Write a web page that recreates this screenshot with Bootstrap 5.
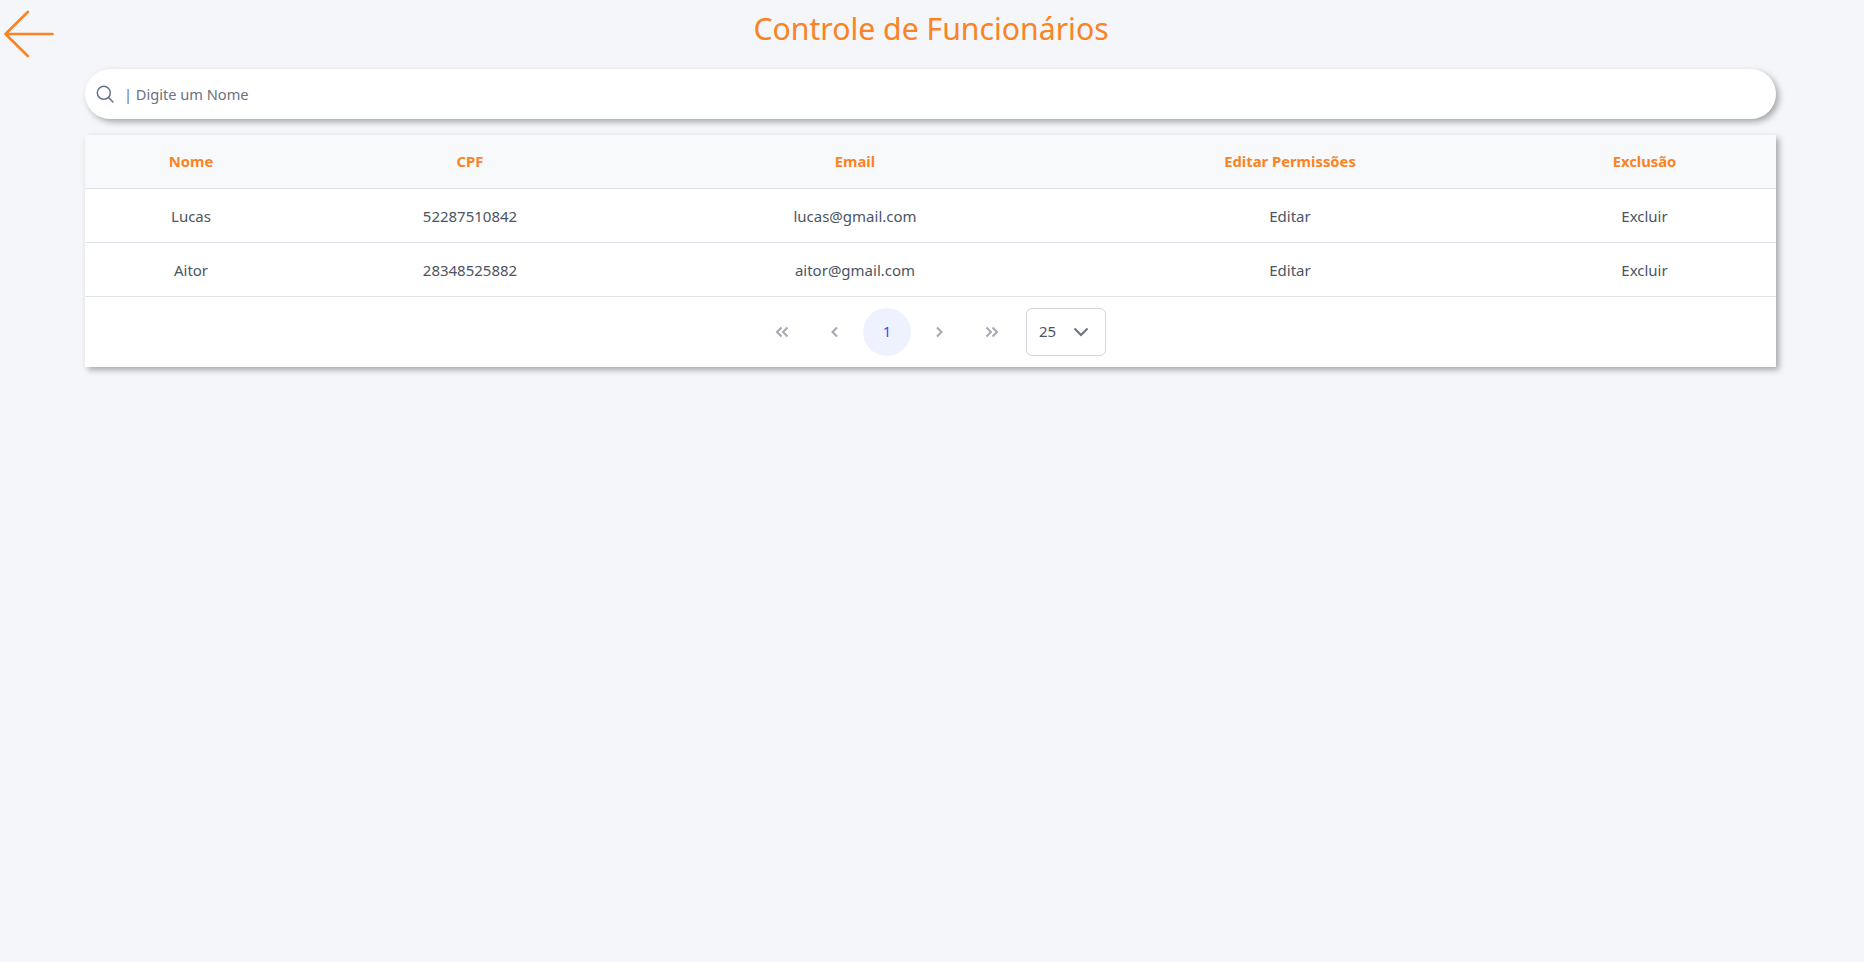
<!DOCTYPE html>
<html lang="pt-BR">
<head>
<meta charset="utf-8">
<title>Controle de Funcionários</title>
<link href="https://cdn.jsdelivr.net/npm/bootstrap@5.3.0/dist/css/bootstrap.min.css" rel="stylesheet">
<style>
html,body{height:100%}
body{background:#f4f6fa;font-family:"Noto Sans","Open Sans",sans-serif;font-size:15px;color:#4b5563;overflow:hidden}
.back-link{position:absolute;left:4px;top:10px;line-height:0}
.page-title{font-family:"Noto Sans",sans-serif;font-size:30.200px;font-weight:400;color:#fa8324;line-height:40px;margin:0;padding-top:9px;padding-bottom:1px;padding-right:2px;text-align:center}
.page-wrap{width:1691px;margin-left:85px}
.search-box{height:50px;margin-top:19px;background:#fff;border-radius:25px;box-shadow:3px 3px 6px rgba(0,0,0,.32);padding-left:11px;gap:10px}
.search-text{font-size:14.600px;color:#6b7280;padding-top:1px}
.grid-card{margin-top:16px;background:#fff;box-shadow:3px 3px 6px rgba(0,0,0,.32)}
.grid-table{margin:0;table-layout:fixed;width:100%;--bs-table-bg:transparent}
.grid-table th,.grid-table td{text-align:center;vertical-align:middle;border-bottom:1px solid #e0e3e9;padding:0}
.grid-table td{padding-top:2px}
.grid-table thead tr{height:53px}
.grid-table tbody tr{height:54px}
.grid-table th{background:#f8f9fa;color:#fa8324;font-weight:700;font-size:14.800px}
.grid-table td{color:#4b5563;font-size:15px}
.c1{width:212px}.c2{width:346px}.c3{width:424px}.c4{width:446px}
.pager{height:70px;padding-left:2px}
.pg-btn{width:48px;height:48px;margin:0 2px;display:flex;align-items:center;justify-content:center;border-radius:50%;color:#4f46e5;font-size:15px;line-height:1}
.pg-btn.is-on{background:#eef2ff}
.pg-size{width:80px;height:48px;margin-left:9px;border:1px solid #d1d5db;border-radius:6px;padding:0 16px 0 12px;color:#4b5563;font-size:15px}
</style>
</head>
<body>
<a class="back-link" href="#" aria-label="Voltar">
<svg width="50" height="48" viewBox="0 0 50 48" fill="none" stroke="#fa8324" stroke-width="2.600" stroke-linecap="round" stroke-linejoin="round"><path d="M48.500 24H1.500M24 1.800 1.500 24 23.800 46"/></svg>
</a>
<h1 class="page-title">Controle de Funcionários</h1>
<main class="page-wrap">
<div class="search-box d-flex align-items-center">
<svg width="18" height="18" viewBox="0 0 18 18" fill="none" stroke="#64748b" stroke-width="1.500" stroke-linecap="round"><circle cx="7.800" cy="7.800" r="6.500"/><path d="m12.500 12.500 4.500 4.500"/></svg>
<span class="search-text">| Digite um Nome</span>
</div>
<div class="grid-card">
<table class="table grid-table">
<colgroup><col class="c1"><col class="c2"><col class="c3"><col class="c4"><col></colgroup>
<thead><tr><th>Nome</th><th>CPF</th><th>Email</th><th>Editar Permissões</th><th>Exclusão</th></tr></thead>
<tbody>
<tr><td>Lucas</td><td>52287510842</td><td>lucas@gmail.com</td><td>Editar</td><td>Excluir</td></tr>
<tr><td>Aitor</td><td>28348525882</td><td>aitor@gmail.com</td><td>Editar</td><td>Excluir</td></tr>
</tbody>
</table>
<nav class="pager d-flex align-items-center justify-content-center">
<span class="pg-btn"><svg width="14" height="12" viewBox="0 0 14 12" fill="none" stroke="#a3a8b1" stroke-width="2"><path d="M5.500 1.500 1 6l4.500 4.500M11.500 1.500 7 6l4.500 4.500"/></svg></span>
<span class="pg-btn"><svg width="8" height="12" viewBox="0 0 8 12" fill="none" stroke="#a3a8b1" stroke-width="2"><path d="M6 1.500 1.500 6 6 10.500"/></svg></span>
<span class="pg-btn is-on">1</span>
<span class="pg-btn"><svg width="8" height="12" viewBox="0 0 8 12" fill="none" stroke="#a3a8b1" stroke-width="2"><path d="M2 1.500 6.500 6 2 10.500"/></svg></span>
<span class="pg-btn"><svg width="14" height="12" viewBox="0 0 14 12" fill="none" stroke="#a3a8b1" stroke-width="2"><path d="M2.500 1.500 7 6l-4.500 4.500M8.500 1.500 13 6l-4.500 4.500"/></svg></span>
<div class="pg-size d-flex align-items-center justify-content-between"><span>25</span><svg width="16" height="10" viewBox="0 0 16 10" fill="none" stroke="#6b7280" stroke-width="2"><path d="m1.500 1.500 6.500 6.500 6.500-6.500"/></svg></div>
</nav>
</div>
</main>
<script src="https://cdn.jsdelivr.net/npm/bootstrap@5.3.0/dist/js/bootstrap.bundle.min.js"></script>
</body>
</html>
